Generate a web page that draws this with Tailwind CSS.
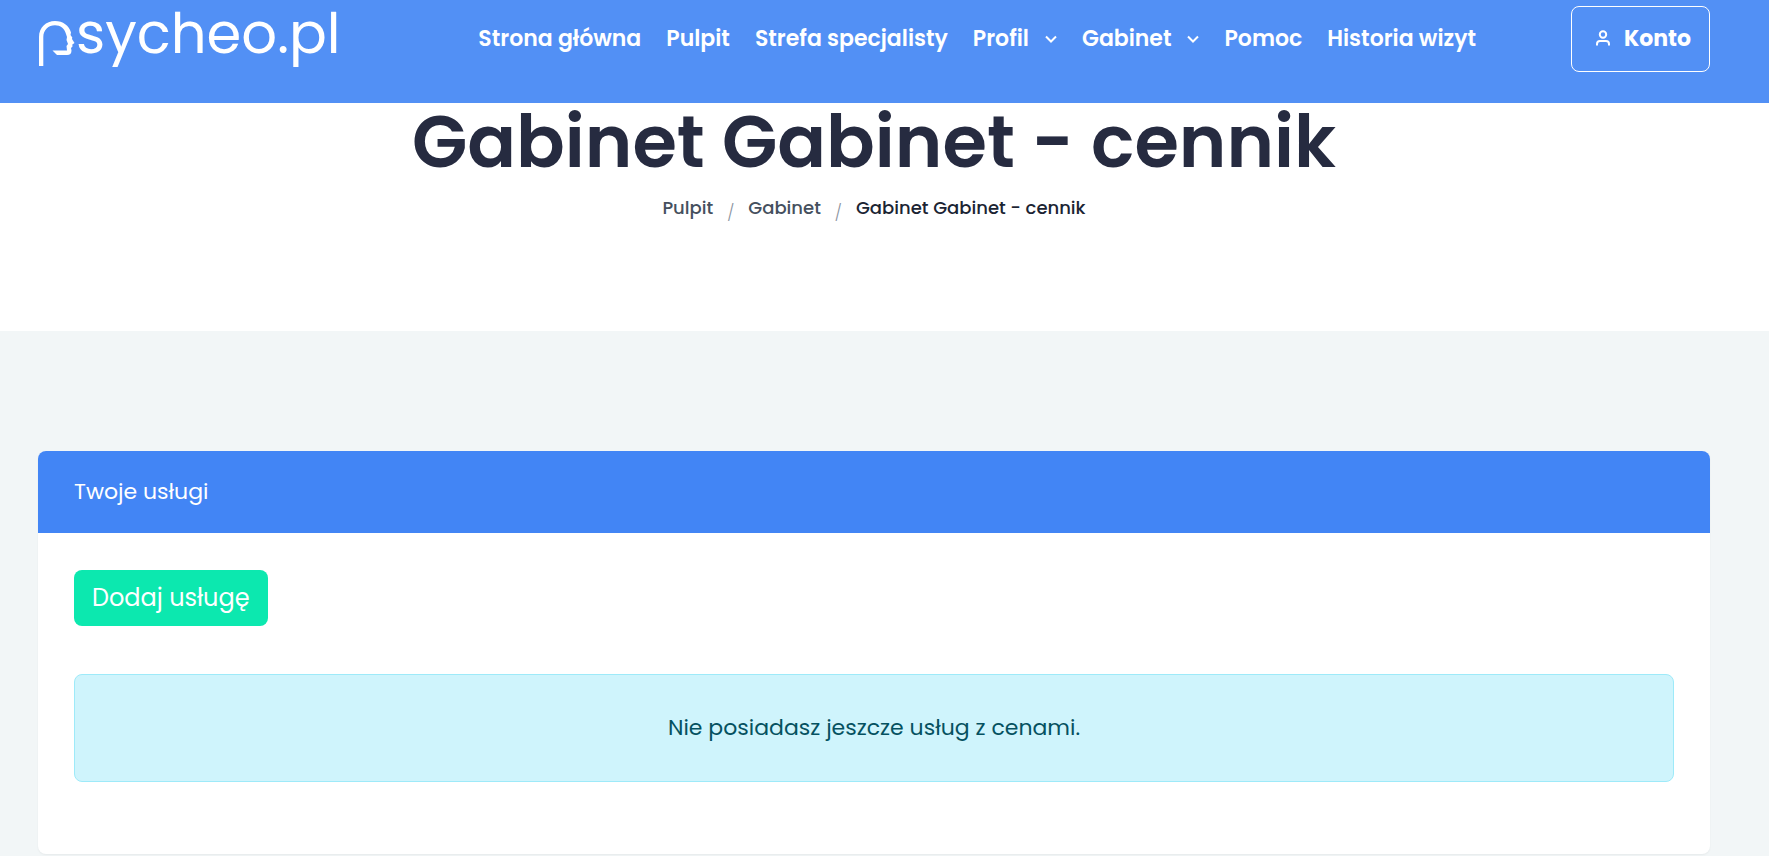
<!DOCTYPE html>
<html lang="pl">
<head>
    <meta charset="UTF-8">
    <meta name="viewport" content="width=device-width, initial-scale=1.0">
    <title>Gabinet Gabinet - cennik</title>
    <script src="https://cdn.jsdelivr.net/npm/@tailwindcss/browser@4"></script>
</head>
<body class="min-h-screen bg-[#f2f6f7] font-[Poppins,Inter,sans-serif] text-[#262b40]">
    <header class="bg-[#5290f5] pl-[38px] pr-[59px] pt-1.5 pb-[31px] text-white">
        <div class="flex items-center">
            <a href="#" aria-label="psycheo.pl" class="flex h-[66px] items-start">
                <!-- letter p with a face in profile -->
                <svg class="h-[66px] w-[38px]" viewBox="0 0 38 66" fill="currentColor">
                    <path d="M1 60V31C1 21.500 8 15 17 15C25 15 31 19.500 33 26.500L32.500 29L34.300 31.500L34 33L36.500 37L34.300 38.500L34.500 40.500L33 42L33.500 44.500C33.500 47.500 32 49 29 49H19L14.500 44.500H29L28.500 40L30 38L28.500 34L29 31L28 28C26.500 22.500 22.500 19.300 17 19.300C10.500 19.300 5.300 24 5.300 31V60Z"/>
                </svg>
                <span class="text-[56px] leading-[56px]">sycheo.pl</span>
            </a>
            <nav class="ml-auto mr-[95px] flex items-center gap-[25px] text-[22px] font-semibold leading-8">
                <a href="#">Strona główna</a>
                <a href="#">Pulpit</a>
                <a href="#">Strefa specjalisty</a>
                <a href="#" class="flex items-center gap-4">Profil
                    <svg class="h-2 w-3" viewBox="0 0 12 8" fill="none" stroke="currentColor" stroke-width="2"><path d="M1 1.500L6 6.500L11 1.500"/></svg>
                </a>
                <a href="#" class="flex items-center gap-4">Gabinet
                    <svg class="h-2 w-3" viewBox="0 0 12 8" fill="none" stroke="currentColor" stroke-width="2"><path d="M1 1.500L6 6.500L11 1.500"/></svg>
                </a>
                <a href="#">Pomoc</a>
                <a href="#">Historia wizyt</a>
            </nav>
            <button type="button" class="flex h-[66px] w-[139px] items-center justify-center gap-3.5 rounded-lg border border-white pb-0.5 pl-1.5 text-[22px] font-bold">
                <svg class="h-4 w-3.5" viewBox="0 0 14 16" fill="none" stroke="currentColor" stroke-width="2"><circle cx="7" cy="4.500" r="3.200"/><path d="M1 15.500V14A3 3 0 0 1 4 11H10A3 3 0 0 1 13 14V15.500"/></svg>
                Konto
            </button>
        </div>
    </header>

    <section class="bg-white pb-[108px] pl-[38px] pr-[59px] text-center">
        <h1 class="text-[72px] font-semibold leading-[78px]">Gabinet Gabinet - cennik</h1>
        <ol class="mt-3 flex justify-center text-[18px] font-medium leading-[29px] text-[#45505e]">
            <li><a href="#">Pulpit</a></li>
            <li class="px-3.5 pt-2.5 text-base font-light leading-5 text-[#8a93a0]" aria-hidden="true">/</li>
            <li><a href="#">Gabinet</a></li>
            <li class="px-3.5 pt-2.5 text-base font-light leading-5 text-[#8a93a0]" aria-hidden="true">/</li>
            <li class="text-[#1b2433]" aria-current="page">Gabinet Gabinet - cennik</li>
        </ol>
    </section>

    <main class="pb-1 pl-[38px] pr-[59px] pt-[120px]">
        <div class="overflow-hidden rounded-lg bg-white shadow-xs">
            <h2 class="bg-[#4285f5] px-9 py-6 text-[22px] leading-[34px] text-white">Twoje usługi</h2>
            <div class="px-9 pb-[72px] pt-[37px]">
                <button type="button" class="h-14 rounded-lg bg-[#0ce8af] px-[18px] text-[24px] text-white">Dodaj usługę</button>
                <p class="mt-12 rounded-lg border border-[#9eeaf9] bg-[#cff4fc] py-9 text-center text-[22px] leading-[34px] text-[#055160]">Nie posiadasz jeszcze usług z cenami.</p>
            </div>
        </div>
    </main>
</body>
</html>
